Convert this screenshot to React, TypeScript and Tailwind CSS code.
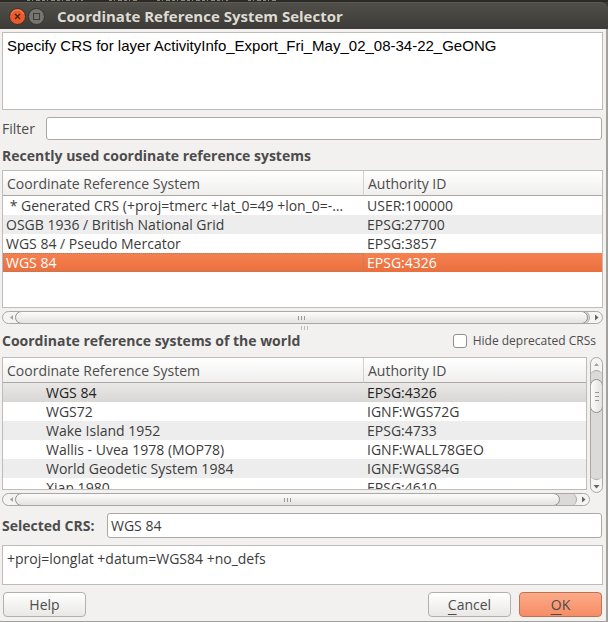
import React, { useState } from 'react';
import clsx from 'clsx';

interface CrsRow {
  name: string;
  id: string;
}

const recentCrs: CrsRow[] = [
  { name: '\u00a0* Generated CRS (+proj=tmerc +lat_0=49 +lon_0=-…', id: 'USER:100000' },
  { name: 'OSGB 1936 / British National Grid', id: 'EPSG:27700' },
  { name: 'WGS 84 / Pseudo Mercator', id: 'EPSG:3857' },
  { name: 'WGS 84', id: 'EPSG:4326' },
];

const worldCrs: CrsRow[] = [
  { name: 'WGS 84', id: 'EPSG:4326' },
  { name: 'WGS72', id: 'IGNF:WGS72G' },
  { name: 'Wake Island 1952', id: 'EPSG:4733' },
  { name: 'Wallis - Uvea 1978 (MOP78)', id: 'IGNF:WALL78GEO' },
  { name: 'World Geodetic System 1984', id: 'IGNF:WGS84G' },
  { name: 'Xian 1980', id: 'EPSG:4610' },
];

interface CrsTableProps {
  label: string;
  rows: CrsRow[];
  selected: number;
  onSelect: (index: number) => void;
  nested?: boolean;
}

const CrsTable: React.FC<CrsTableProps> = ({ label, rows, selected, onSelect, nested }) => (
  <table aria-label={label} className="w-full table-fixed border-separate border-spacing-0 text-left">
    <thead>
      <tr className="h-[25px] bg-gradient-to-b from-white to-[#efeeed] text-[#4c4c4c]">
        <th className="w-[361px] border-b border-r border-b-[#aaa8a3] border-r-[#d3d1ce] px-1 py-0 font-normal">
          Coordinate Reference System
        </th>
        <th className="border-b border-[#aaa8a3] px-1 py-0 font-normal">Authority ID</th>
      </tr>
    </thead>
    <tbody>
      {rows.map((row, i) => (
        <tr
          key={row.name}
          onClick={() => onSelect(i)}
          className={clsx(
            'h-[19px] leading-[19px]',
            i === selected && !nested && 'bg-gradient-to-b from-[#f58150] to-[#eb6f3d] text-white',
            i === selected && nested && 'bg-gradient-to-b from-[#e9e8e7] to-[#d9d7d5] text-[#222]',
            i !== selected && (i % 2 === 1) !== !!nested && 'bg-[#ededed]',
            i !== selected && (i % 2 === 1) === !!nested && 'bg-white'
          )}
        >
          <td
            className={clsx(
              'whitespace-nowrap p-0',
              nested ? 'pl-[43px]' : 'pl-[3px]',
              i === selected && !nested && 'outline-1 -outline-offset-1 outline-dotted outline-[#a08070]'
            )}
          >
            {row.name}
          </td>
          <td className="whitespace-nowrap p-0 pl-[3px]">{row.id}</td>
        </tr>
      ))}
    </tbody>
  </table>
);

const Arrow: React.FC<{ dir: 'left' | 'right' | 'up' | 'down'; faint?: boolean }> = ({ dir, faint }) => {
  const shapes = {
    left: 'M5 1v5L2 3.5z',
    right: 'M2 0.5v6L5.5 3.5z',
    up: 'M1 5h5L3.5 2z',
    down: 'M0.5 2h6L3.5 5.5z',
  };
  return (
    <svg viewBox="0 0 7 7" className="h-[7px] w-[7px]" fill={faint ? '#a5a39f' : '#666'}>
      <path d={shapes[dir]} />
    </svg>
  );
};

const Grip: React.FC<{ vertical?: boolean; faint?: boolean }> = ({ vertical, faint }) => (
  <span className={clsx('flex', vertical ? 'flex-col gap-[3px]' : 'gap-[2px]')}>
    {[0, 1, 2].map((n) => (
      <span
        key={n}
        className={clsx(faint ? 'bg-[#c0beba]' : 'bg-[#9b9995]', vertical ? 'h-px w-[4px]' : 'h-[4px] w-px')}
      />
    ))}
  </span>
);

const HScroll: React.FC<{ full?: boolean }> = ({ full }) => (
  <div className="flex h-[13px] overflow-hidden rounded-full border border-[#aaa8a4] bg-[#f5f4f3]">
    <button aria-label="Scroll left" className="flex w-3 items-center justify-center pl-1">
      <Arrow dir="left" faint />
    </button>
    <div className="z-10 -my-px flex flex-1 items-center justify-center rounded-full border border-[#918f8b] bg-gradient-to-b from-[#fcfcfc] to-[#e3e2e0]">
      <Grip />
    </div>
    {/* trough left of the end button */}
    <div
      className={clsx(
        '-my-px -ml-2 rounded-r-full border-r border-[#aaa8a4] bg-[#dcdad8]',
        full ? 'w-[10px]' : 'w-[25px]'
      )}
    />
    <button aria-label="Scroll right" className="flex w-3 items-center justify-center">
      <Arrow dir="right" />
    </button>
  </div>
);

const VScroll: React.FC = () => (
  <div className="flex w-[13px] flex-col overflow-hidden rounded-full border border-[#aaa8a4] bg-[#f5f4f3]">
    <button aria-label="Scroll up" className="flex h-3 items-center justify-center">
      <Arrow dir="up" faint />
    </button>
    <div className="-mx-px -mb-2 h-[17px] rounded-t-full border-t border-[#aaa8a4] bg-[#dcdad8]" />
    <div className="z-10 -mx-px flex h-[34px] items-center justify-center rounded-full border border-[#918f8b] bg-gradient-to-r from-[#fcfcfc] to-[#e3e2e0]">
      <Grip vertical />
    </div>
    <div className="-mx-px -mt-2 flex-1 rounded-b-full border-b border-[#aaa8a4] bg-[#dcdad8]" />
    <button aria-label="Scroll down" className="flex h-3 items-center justify-center">
      <Arrow dir="down" />
    </button>
  </div>
);

const buttonBase = 'h-[25px] w-[83px] rounded border text-[14px] text-[#4c4c4c]';
const plainButton = 'border-[#b3b0ab] bg-gradient-to-b from-white to-[#e9e8e6]';

const App: React.FC = () => {
  const [filter, setFilter] = useState('');
  const [hideDeprecated, setHideDeprecated] = useState(false);
  const [recent, setRecent] = useState(3);
  const [world, setWorld] = useState(0);

  return (
    <div className="min-h-screen w-full bg-[#3c3b37] font-['Open_Sans','Noto_Sans',sans-serif] text-[14px] leading-[19px] text-[#3c3c3c]">
      {/* sliver of the window behind */}
      <svg className="block h-[2px] w-full bg-[#2b2a27]" stroke="#8a877e" strokeWidth="1" strokeDasharray="3 2 1 3 4 2">
        <path d="M27 0.5H83M109 0.5H137M157 0.5H228M248 0.5H278" />
      </svg>

      {/* title bar */}
      <header className="flex h-[27px] items-center gap-[2px] rounded-tr-lg border-t border-[#5c5a50] bg-gradient-to-b from-[#504f49] to-[#3c3b37] pl-[9px]">
        <button aria-label="Close">
          <svg viewBox="0 0 17 17" className="h-[17px] w-[17px]">
            <circle cx="8.5" cy="8.5" r="8" fill="#ec5a2c" stroke="#35332f" />
            <path d="M2.500 6a6.500 6.500 0 0 1 12 0" fill="none" stroke="#f78b64" />
            <path d="M6 6l5 5M11 6l-5 5" stroke="#48231a" strokeWidth="1.400" />
          </svg>
        </button>
        <button aria-label="Maximize">
          <svg viewBox="0 0 17 17" className="h-[17px] w-[17px]">
            <circle cx="8.5" cy="8.5" r="8" fill="#77756e" stroke="#35332f" />
            <rect x="5.500" y="5.500" width="6" height="6" fill="none" stroke="#3c3b37" />
          </svg>
        </button>
        <h1 className="pl-[10px] text-[15px] font-bold text-[#dfdbd2]">Coordinate Reference System Selector</h1>
      </header>

      <main className="flex flex-col border-b border-r-2 border-[#a3a19e] bg-[#f2f1f0] pb-1 pl-[2px] pr-[3px] pt-[3px]">
        <textarea
          readOnly
          aria-label="Message"
          value="Specify CRS for layer ActivityInfo_Export_Fri_May_02_08-34-22_GeONG"
          className="h-[78px] w-full resize-none border border-[#bebcb8] bg-white px-1 py-[3px] font-['Liberation_Sans',Arial,sans-serif] text-[15px] leading-[19px] text-black outline-none"
        />

        <div className="mt-[7px] flex items-center gap-2 pr-px">
          <label htmlFor="filter" className="w-9 text-[#4c4c4c]">Filter</label>
          <input
            id="filter"
            value={filter}
            onChange={(e) => setFilter(e.target.value)}
            className="h-[23px] min-w-0 flex-1 rounded-[3px] border border-[#aaa8a3] bg-white px-1 outline-none"
          />
        </div>

        <h2 className="mt-[6px] font-bold text-[#4c4c4c]">Recently used coordinate reference systems</h2>
        <div className="mt-[5px] h-[138px] overflow-hidden border border-[#bebcb8] bg-white">
          <CrsTable label="Recently used" rows={recentCrs} selected={recent} onSelect={setRecent} />
        </div>
        <div className="mt-[3px]">
          <HScroll full />
        </div>

        <div className="flex h-[7px] items-center justify-center pl-1">
          <Grip faint />
        </div>

        <div className="flex items-center justify-between pr-[7px]">
          <h2 className="font-bold text-[#4c4c4c]">Coordinate reference systems of the world</h2>
          <label className="flex items-center gap-[6px] text-[12px] text-[#4c4c4c]">
            <input
              type="checkbox"
              checked={hideDeprecated}
              onChange={(e) => setHideDeprecated(e.target.checked)}
              className="h-[14px] w-[14px] appearance-none rounded-[3px] border border-[#918f8b] bg-white checked:bg-[#f07746]"
            />
            Hide deprecated CRSs
          </label>
        </div>

        <div className="mt-[7px] flex gap-[3px]">
          <div className="flex min-w-0 flex-1 flex-col gap-[3px]">
            <div className="h-[133px] overflow-hidden border border-[#bebcb8] bg-white">
              <CrsTable label="World" rows={worldCrs} selected={world} onSelect={setWorld} nested />
            </div>
            <div className="-mr-[3px]">
              <HScroll />
            </div>
          </div>
          <div className="mb-[13px] flex">
            <VScroll />
          </div>
        </div>

        <div className="mt-[7px] flex items-center gap-2 pr-px">
          <label htmlFor="selected" className="w-[97px] font-bold text-[#4c4c4c]">Selected CRS:</label>
          <input
            id="selected"
            readOnly
            value={worldCrs[world].name}
            className="h-[25px] min-w-0 flex-1 rounded-[3px] border border-[#aaa8a3] bg-white px-[3px] outline-none"
          />
        </div>
        <textarea
          readOnly
          aria-label="Projection definition"
          value="+proj=longlat +datum=WGS84 +no_defs"
          className="mt-[7px] h-[40px] w-full resize-none border border-[#bebcb8] bg-white px-1 py-[3px] leading-[19px] outline-none"
        />

        <div className="mt-[7px] flex gap-2 pl-px pr-px">
          <button className={clsx(buttonBase, plainButton, 'mr-auto')}>Help</button>
          <button className={clsx(buttonBase, plainButton)}>
            <span className="underline underline-offset-4">C</span>ancel
          </button>
          <button className={clsx(buttonBase, 'border-[#bd7353] bg-gradient-to-b from-[#fdaa88] to-[#f58d66]')}>
            <span className="underline underline-offset-4">O</span>K
          </button>
        </div>
      </main>
    </div>
  );
};

export default App;
